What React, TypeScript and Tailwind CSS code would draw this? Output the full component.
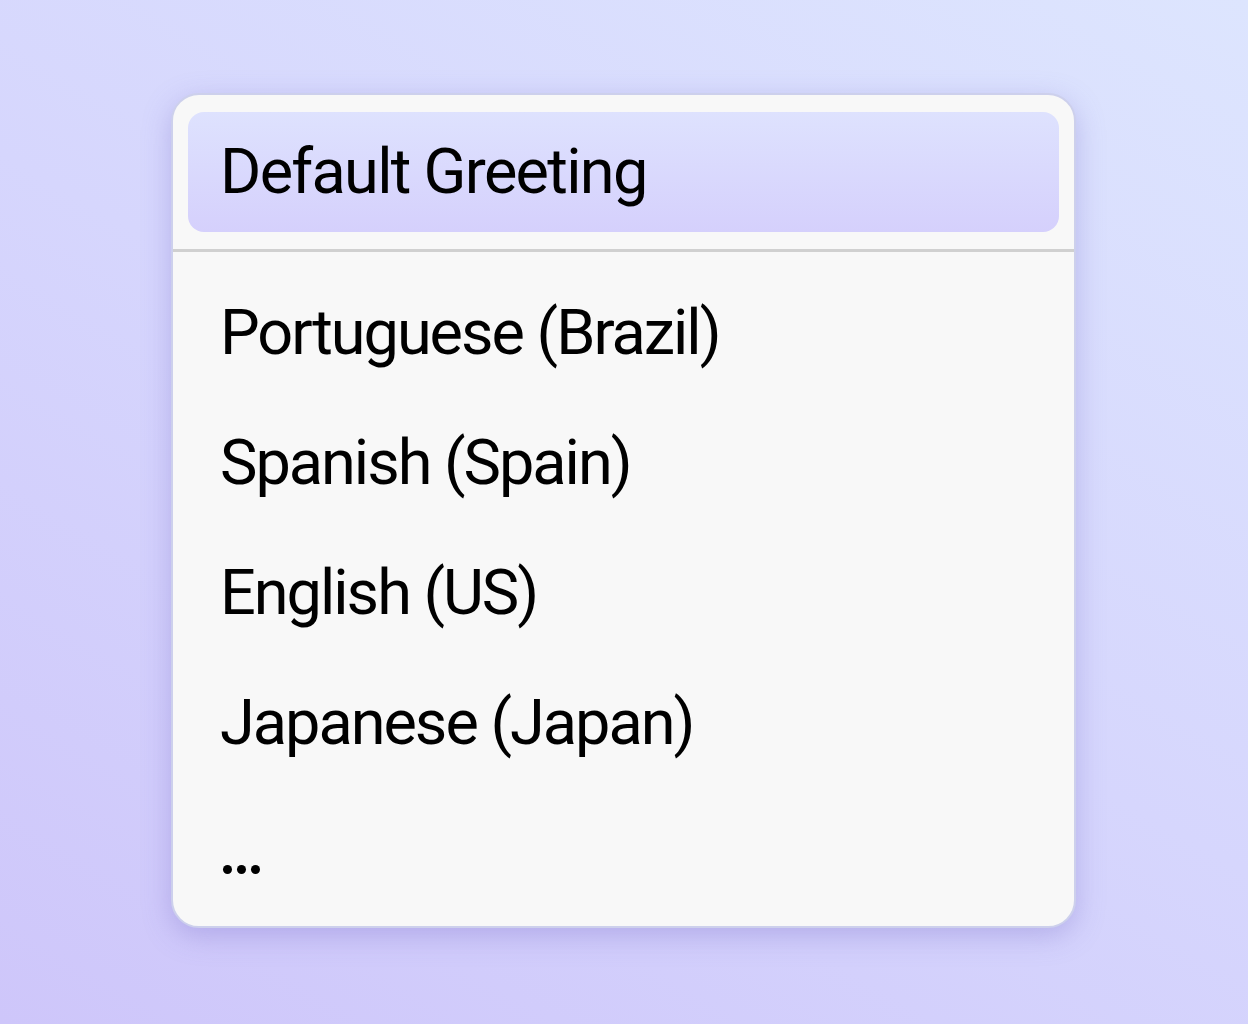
const LOCALES = [
  "Portuguese (Brazil)",
  "Spanish (Spain)",
  "English (US)",
  "Japanese (Japan)",
];

export default function App() {
  return (
    <div className="h-[1024px] w-[1248px] bg-[linear-gradient(30deg,#cec6fa_0%,#d6d6fd_50%,#dde5fe_100%)] pl-[171px] pt-[93px] font-['Roboto','Inter',sans-serif] text-black">
      <div className="h-[835px] w-[905px] overflow-hidden rounded-[28px] border-2 border-[#cdd0ec] bg-[#f8f8f8] shadow-[0_8px_28px_rgba(120,110,200,0.35)]">
        <div className="px-[15px] pb-[17px] pt-[17px]">
          <div className="flex h-[120px] items-center rounded-[16px] bg-[linear-gradient(180deg,#dee2fe,#d5d0fc)] px-[32px] text-[63px] tracking-[-1.7px]">
            Default Greeting
          </div>
        </div>
        <div className="h-[3px] bg-[#d0d0d0]" />
        <ul className="pt-[16px]">
          {LOCALES.map((name) => (
            <li
              key={name}
              className="flex h-[130px] items-center px-[47px] text-[63px] tracking-[-2px]"
            >
              {name}
            </li>
          ))}
          <li className="flex h-[130px] items-center gap-[5px] px-[50px] pt-[32px]">
            <span className="size-[9px] rounded-full bg-black" />
            <span className="size-[9px] rounded-full bg-black" />
            <span className="size-[9px] rounded-full bg-black" />
          </li>
        </ul>
      </div>
    </div>
  );
}
